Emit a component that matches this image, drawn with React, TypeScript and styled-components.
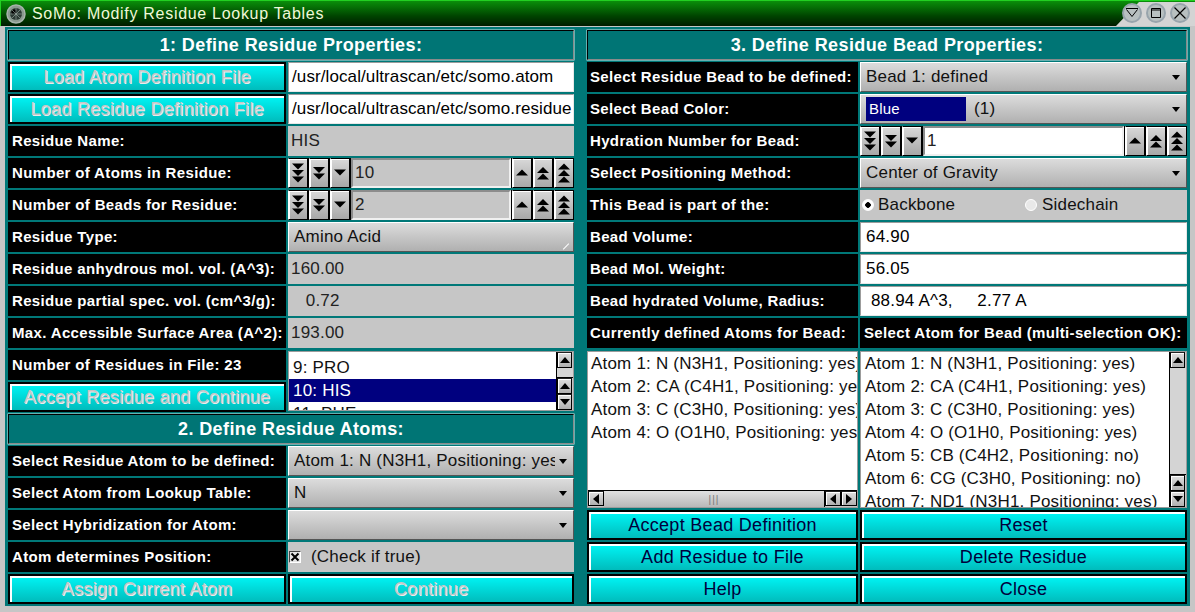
import styled, { createGlobalStyle, css } from "styled-components";

const GlobalStyle = createGlobalStyle`
    html, body {
        margin: 0;
        padding: 0;
        background: #c6c6c6;
    }
`;

const Window = styled.div`
    width: 1195px;
    height: 612px;
    overflow: hidden;
    background: #c6c6c6;
    font-family: "Liberation Sans", Arial, sans-serif;
    font-size: 17px;
    letter-spacing: 0.2px;
`;

const TitleBar = styled.div`
    height: 26px;
    display: flex;
    align-items: center;
    background: #d4d4d4;
`;

const TitleFill = styled.div`
    flex: 1;
    height: 26px;
    box-sizing: border-box;
    display: flex;
    align-items: center;
    gap: 6px;
    padding-left: 5px;
    border-top: 1px solid #22d022;
    border-left: 1px solid #22d022;
    background: linear-gradient(#0a8f0a, #004400 60%, #001c00);
    clip-path: polygon(0 0, 100% 0, 100% 2px, 1139px 2px, 1116px 100%, 0 100%);
    color: #f0f8d8;
    font-size: 16px;
    letter-spacing: 0.7px;
`;

const TitleButtons = styled.div`
    position: absolute;
    top: 3px;
    right: 5px;
    display: flex;
    gap: 4px;
`;

const Body = styled.div`
    margin: 1px 5px 0 5px;
    height: 579px;
    padding: 3px 3px 0 3px;
    box-sizing: border-box;
    background: #007878;
    display: flex;
    gap: 13px;
`;

const Column = styled.div<{ $label: number; $value: number }>`
    display: grid;
    grid-template-columns: ${(p) => p.$label}px ${(p) => p.$value}px;
    grid-auto-rows: 30px;
    gap: 2px;
`;

const Header = styled.div`
    grid-column: 1 / -1;
    box-sizing: border-box;
    display: flex;
    align-items: center;
    justify-content: center;
    background: #007575;
    border: 1px solid;
    border-color: #000 #8a8a8a #8a8a8a #000;
    box-shadow: 0 0 0 0.5px #d0e8e8;
    color: #fff;
    font-size: 18px;
    font-weight: bold;
    letter-spacing: 0.4px;
`;

const Label = styled.div`
    box-sizing: border-box;
    background: #000;
    color: #fff;
    display: flex;
    align-items: center;
    padding: 0 0 2px 4px;
    font-size: 15px;
    font-weight: bold;
    letter-spacing: 0.35px;
    white-space: nowrap;
    overflow: hidden;
`;

const BeadLabel = styled(Label)`
    padding-left: 3px;
`;

const Button = styled.div<{ $disabled?: boolean }>`
    box-sizing: border-box;
    display: flex;
    align-items: center;
    justify-content: center;
    border: 2px solid #000;
    background: linear-gradient(#00f6f6, #00bcbc);
    box-shadow: inset 2px 2px 0 #fff;
    padding-top: 1px;
    font-size: 18px;
    letter-spacing: 0.3px;
    white-space: nowrap;
    ${(p) =>
        p.$disabled
            ? css`
                  color: #c6c6c6;
                  text-shadow: 1px 1px 0 #ececec;
              `
            : css`
                  color: #00003c;
              `}
`;

const LineEdit = styled.div`
    box-sizing: border-box;
    background: #fff;
    border: 1px solid #9c9c9c;
    border-bottom-color: #e8e8e8;
    border-right-color: #e8e8e8;
    color: #000;
    display: flex;
    align-items: center;
    padding-left: 5px;
    white-space: pre;
    overflow: hidden;
`;

const PathEdit = styled(LineEdit)`
    padding-left: 3px;
    letter-spacing: 0.1px;
`;

const ReadOnly = styled.div`
    background: #c6c6c6;
    color: #222;
    display: flex;
    align-items: center;
    padding-left: 3px;
    white-space: pre;
`;

const Combo = styled.div`
    position: relative;
    box-sizing: border-box;
    display: flex;
    align-items: center;
    padding-left: 5px;
    background: linear-gradient(#dcdcdc, #b0b0b0);
    border: 1px solid;
    border-color: #fff #555 #555 #fff;
    color: #111;
    white-space: nowrap;
    overflow: hidden;
`;

const ComboText = styled.span`
    width: 261px;
    overflow: hidden;
`;

const ComboArrow = styled.i`
    position: absolute;
    right: 6px;
    top: 12px;
    width: 0;
    height: 0;
    border-left: 4px solid transparent;
    border-right: 4px solid transparent;
    border-top: 5px solid #000;
`;

const Corner = styled.i`
    position: absolute;
    right: 3px;
    bottom: 4px;
    width: 8px;
    height: 1px;
    background: #fff;
    transform: rotate(-45deg);
`;

const ColorSwatch = styled.span`
    box-sizing: border-box;
    width: 100px;
    height: 24px;
    margin-right: 8px;
    padding-left: 3px;
    background: #00007f;
    color: #fff;
    font-size: 15px;
    line-height: 24px;
`;

const Spin = styled.div`
    display: flex;
    gap: 1px;
    background: #000;
`;

const SpinButton = styled.div`
    box-sizing: border-box;
    width: 20px;
    display: flex;
    align-items: center;
    justify-content: center;
    background: linear-gradient(#d8d8d8, #a8a8a8);
    border: 1px solid;
    border-color: #000 #000 #000 #fff;
    box-shadow: inset 1px 1px 0 #fff;
`;

const SpinField = styled.div<{ $white?: boolean }>`
    flex: 1;
    box-sizing: border-box;
    display: flex;
    align-items: center;
    padding-left: 2px;
    color: #222;
    background: ${(p) => (p.$white ? "#fff" : "#c6c6c6")};
    border: 2px solid #c6c6c6;
    border-top-color: #8c8c8c;
    border-left-color: #8c8c8c;
    border-right-color: #f0f0f0;
    border-bottom-color: #f0f0f0;
`;

const Toggle = styled.div`
    background: #c6c6c6;
    color: #111;
    display: flex;
    align-items: center;
`;

const CheckBox = styled.span`
    box-sizing: border-box;
    width: 12px;
    height: 12px;
    margin-left: 1px;
    margin-right: 10px;
    display: flex;
    background: #e4e4e4;
    border: 1px solid #fff;
    border-top-color: #444;
    border-left-color: #444;
`;

const Radio = styled.span<{ $checked?: boolean }>`
    box-sizing: border-box;
    width: 12px;
    height: 12px;
    border-radius: 50%;
    margin-right: ${(p) => (p.$checked ? 4 : 5)}px;
    background: ${(p) => (p.$checked ? "radial-gradient(circle, #000 0 2.5px, #fff 3px)" : "#e8e8e8")};
    border: 1px solid #fff;
`;

const RadioGroup = styled.label<{ $width: number }>`
    display: flex;
    align-items: center;
    width: ${(p) => p.$width}px;
    padding-left: 2px;
    box-sizing: border-box;
`;

const ListBox = styled.div<{ $rows: number; $bottom?: number; $top?: number }>`
    grid-row: span ${(p) => p.$rows};
    position: relative;
    box-sizing: border-box;
    margin-top: 1px;
    margin-bottom: ${(p) => p.$bottom ?? 0}px;
    padding-top: ${(p) => p.$top ?? 0}px;
    background: #fff;
    border: 1px solid #9c9c9c;
    overflow: hidden;
    color: #111;
`;

const ListItem = styled.div<{ $selected?: boolean; $inset?: number }>`
    height: 23px;
    line-height: 23px;
    padding-left: ${(p) => p.$inset ?? 4}px;
    white-space: nowrap;
    overflow: hidden;
    background: ${(p) => (p.$selected ? "#00007f" : "transparent")};
    color: ${(p) => (p.$selected ? "#fff" : "#111")};
`;

const VBar = styled.div`
    position: absolute;
    top: 0;
    right: 0;
    bottom: 0;
    width: 16px;
    display: flex;
    flex-direction: column;
    background: #c6c6c6;
    border-left: 1px solid #000;
`;

const VThumb = styled.div`
    flex: 1;
    background: #d4d4d4;
    border-bottom: 1px solid #000;
`;

const HBar = styled.div`
    position: absolute;
    left: 0;
    right: 0;
    bottom: 0;
    height: 16px;
    display: flex;
    background: #c6c6c6;
    border-top: 1px solid #000;
`;

const HThumb = styled.div`
    flex: 1;
    display: flex;
    align-items: center;
    justify-content: center;
    background: linear-gradient(#e0e0e0, #b8b8b8);
    border-right: 1px solid #000;
    color: #777;
    font-size: 10px;
    letter-spacing: 1px;
`;

const ArrowButton = styled.div<{ $v?: boolean }>`
    box-sizing: border-box;
    flex: none;
    width: ${(p) => (p.$v ? "15px" : "16px")};
    height: ${(p) => (p.$v ? "16px" : "15px")};
    display: flex;
    align-items: center;
    justify-content: center;
    background: linear-gradient(#e0e0e0, #b0b0b0);
    border: 1px solid #000;
    border-top-color: #222;
    box-shadow: inset 1px 1px 0 #fff;
`;

const Tri = ({ dir = "up" }: { dir?: "up" | "down" | "left" | "right" }) => {
    const pts = {
        up: "0,6 10,6 5,0",
        down: "0,0 10,0 5,6",
        left: "6,0 6,10 0,5",
        right: "0,0 0,10 6,5",
    }[dir];
    const horizontal = dir === "left" || dir === "right";
    return (
        <svg width={horizontal ? 6 : 10} height={horizontal ? 10 : 6}>
            <polygon points={pts} fill="#000" />
        </svg>
    );
};

const SpinGlyph = ({ count, up }: { count: number; up?: boolean }) => {
    const rows = Array.from({ length: count }, (_, i) => i);
    const total = 7 * count + 3;
    const h = count === 1 ? 8 : total;
    const top = (h - (count * 7 - (count - 1))) / 2;
    return (
        <svg width="16" height={h}>
            {rows.map((i) => {
                const y = top + i * 6.5;
                return (
                    <polygon
                        key={i}
                        points={up ? `2,${y + 6} 14,${y + 6} 8,${y}` : `2,${y} 14,${y} 8,${y + 6}`}
                        fill="#000"
                    />
                );
            })}
        </svg>
    );
};

const SpinBox = ({ value, white }: { value: string; white?: boolean }) => (
    <Spin>
        <SpinButton><SpinGlyph count={3} /></SpinButton>
        <SpinButton><SpinGlyph count={2} /></SpinButton>
        <SpinButton><SpinGlyph count={1} /></SpinButton>
        <SpinField $white={white}>{value}</SpinField>
        <SpinButton><SpinGlyph count={1} up /></SpinButton>
        <SpinButton><SpinGlyph count={2} up /></SpinButton>
        <SpinButton><SpinGlyph count={3} up /></SpinButton>
    </Spin>
);

const VScroll = () => (
    <VBar>
        <ArrowButton $v><Tri /></ArrowButton>
        <VThumb />
        <ArrowButton $v><Tri /></ArrowButton>
        <ArrowButton $v><Tri dir="down" /></ArrowButton>
    </VBar>
);

const HScroll = () => (
    <HBar>
        <ArrowButton><Tri dir="left" /></ArrowButton>
        <HThumb>|||</HThumb>
        <ArrowButton><Tri dir="left" /></ArrowButton>
        <ArrowButton><Tri dir="right" /></ArrowButton>
    </HBar>
);

const WinButton = ({ kind }: { kind: "shade" | "max" | "close" }) => (
    <svg width="20" height="20" viewBox="0 0 20 20">
        <circle cx="10" cy="10" r="9" fill="#b8c0c0" stroke="#98a4ac" strokeWidth="2" />
        {kind === "shade" && <path d="M4 5.5h12M4.5 6.5l5.5 7 5.5-7" fill="none" stroke="#000" strokeWidth="1" />}
        {kind === "max" && <path d="M5.5 5.5h9v9h-9zM5.5 7h9" fill="none" stroke="#000" strokeWidth="1" />}
        {kind === "close" && <path d="M4.5 4.5l11 11M15.5 4.5l-11 11" fill="none" stroke="#000" strokeWidth="1.2" />}
    </svg>
);

const AppIcon = () => (
    <svg width="20" height="20" viewBox="0 0 20 20">
        <circle cx="10" cy="10" r="9" fill="#8a9a90" stroke="#a8b4ac" strokeWidth="1.5" />
        <circle cx="10" cy="10" r="6" fill="#2c3a34" />
        <circle cx="8" cy="8" r="2.5" fill="#000" />
        <path d="M4 10h12M10 4v12M6 6l8 8M14 6l-8 8" stroke="#a0b0a8" strokeWidth="0.6" />
    </svg>
);

const beadAtoms = [
    "Atom 1: N (N3H1, Positioning: yes)",
    "Atom 2: CA (C4H1, Positioning: yes)",
    "Atom 3: C (C3H0, Positioning: yes)",
    "Atom 4: O (O1H0, Positioning: yes)",
];

const allAtoms = [
    ...beadAtoms,
    "Atom 5: CB (C4H2, Positioning: no)",
    "Atom 6: CG (C3H0, Positioning: no)",
    "Atom 7: ND1 (N3H1, Positioning: yes)",
];

export default function App() {
    return (
        <Window>
            <GlobalStyle />
            <TitleBar>
                <TitleFill>
                    <AppIcon />
                    SoMo: Modify Residue Lookup Tables
                </TitleFill>
                <TitleButtons>
                    <WinButton kind="shade" />
                    <WinButton kind="max" />
                    <WinButton kind="close" />
                </TitleButtons>
            </TitleBar>
            <Body>
                <Column $label={278} $value={286}>
                    <Header>1: Define Residue Properties:</Header>
                    <Button $disabled>Load Atom Definition File</Button>
                    <PathEdit>/usr/local/ultrascan/etc/somo.atom</PathEdit>
                    <Button $disabled>Load Residue Definition File</Button>
                    <PathEdit>/usr/local/ultrascan/etc/somo.residue</PathEdit>
                    <Label>Residue Name:</Label>
                    <ReadOnly>HIS</ReadOnly>
                    <Label>Number of Atoms in Residue:</Label>
                    <SpinBox value="10" />
                    <Label>Number of Beads for Residue:</Label>
                    <SpinBox value="2" />
                    <Label>Residue Type:</Label>
                    <Combo>Amino Acid<Corner /></Combo>
                    <Label>Residue anhydrous mol. vol. (A^3):</Label>
                    <ReadOnly>160.00</ReadOnly>
                    <Label>Residue partial spec. vol. (cm^3/g):</Label>
                    <ReadOnly>{"   0.72"}</ReadOnly>
                    <Label>Max. Accessible Surface Area (A^2):</Label>
                    <ReadOnly>193.00</ReadOnly>
                    <Label>Number of Residues in File: 23</Label>
                    <ListBox $rows={2} $bottom={1} $top={4}>
                        <ListItem>9: PRO</ListItem>
                        <ListItem $selected>10: HIS</ListItem>
                        <ListItem>11: PHE</ListItem>
                        <VScroll />
                    </ListBox>
                    <Button $disabled>Accept Residue and Continue</Button>
                    <Header>2. Define Residue Atoms:</Header>
                    <Label>Select Residue Atom to be defined:</Label>
                    <Combo>
                        <ComboText>Atom 1: N (N3H1, Positioning: yes)</ComboText>
                        <ComboArrow />
                    </Combo>
                    <Label>Select Atom from Lookup Table:</Label>
                    <Combo>N<ComboArrow /></Combo>
                    <Label>Select Hybridization for Atom:</Label>
                    <Combo><ComboArrow /></Combo>
                    <Label>Atom determines Position:</Label>
                    <Toggle>
                        <CheckBox>
                            <svg width="10" height="10" viewBox="0 0 10 10">
                                <path d="M1.5 1.5l7 7M8.5 1.5l-7 7" stroke="#000" strokeWidth="2" />
                            </svg>
                        </CheckBox>
                        (Check if true)
                    </Toggle>
                    <Button $disabled>Assign Current Atom</Button>
                    <Button $disabled>Continue</Button>
                </Column>
                <Column $label={271} $value={327}>
                    <Header>3. Define Residue Bead Properties:</Header>
                    <BeadLabel>Select Residue Bead to be defined:</BeadLabel>
                    <Combo>Bead 1: defined<ComboArrow /></Combo>
                    <BeadLabel>Select Bead Color:</BeadLabel>
                    <Combo>
                        <ColorSwatch>Blue</ColorSwatch>
                        (1)
                        <ComboArrow />
                    </Combo>
                    <BeadLabel>Hydration Number for Bead:</BeadLabel>
                    <SpinBox value="1" white />
                    <BeadLabel>Select Positioning Method:</BeadLabel>
                    <Combo>Center of Gravity<ComboArrow /></Combo>
                    <BeadLabel>This Bead is part of the:</BeadLabel>
                    <Toggle>
                        <RadioGroup $width={163}><Radio $checked />Backbone</RadioGroup>
                        <RadioGroup $width={160}><Radio />Sidechain</RadioGroup>
                    </Toggle>
                    <BeadLabel>Bead Volume:</BeadLabel>
                    <LineEdit>64.90</LineEdit>
                    <BeadLabel>Bead Mol. Weight:</BeadLabel>
                    <LineEdit>56.05</LineEdit>
                    <BeadLabel>Bead hydrated Volume, Radius:</BeadLabel>
                    <LineEdit>{" 88.94 A^3,     2.77 A"}</LineEdit>
                    <BeadLabel>Currently defined Atoms for Bead:</BeadLabel>
                    <Label>Select Atom for Bead (multi-selection OK):</Label>
                    <ListBox $rows={5}>
                        {beadAtoms.map((a) => <ListItem key={a} $inset={3}>{a}</ListItem>)}
                        <HScroll />
                    </ListBox>
                    <ListBox $rows={5}>
                        {allAtoms.map((a) => <ListItem key={a}>{a}</ListItem>)}
                        <VScroll />
                    </ListBox>
                    <Button>Accept Bead Definition</Button>
                    <Button>Reset</Button>
                    <Button>Add Residue to File</Button>
                    <Button>Delete Residue</Button>
                    <Button>Help</Button>
                    <Button>Close</Button>
                </Column>
            </Body>
        </Window>
    );
}
